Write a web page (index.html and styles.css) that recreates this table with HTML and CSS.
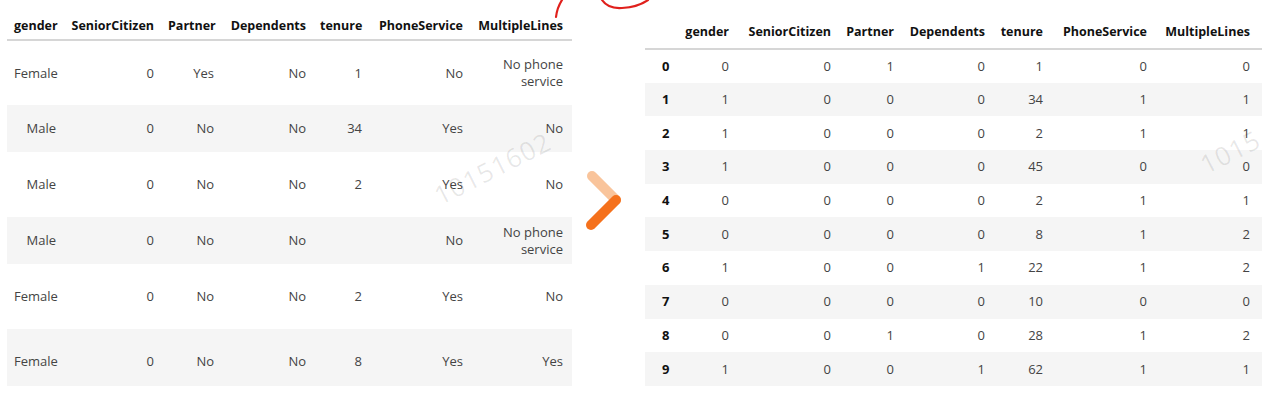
FILE: index.html
```html
<!DOCTYPE html>
<html>
<head>
<meta charset="utf-8">
<link rel="stylesheet" href="styles.css">
</head>
<body>
<div class="page">
  <table class="df left">
    <colgroup>
      <col class="c1"><col class="c2"><col class="c3"><col class="c4"><col class="c5"><col class="c6"><col class="c7">
    </colgroup>
    <thead>
      <tr><th>gender</th><th>SeniorCitizen</th><th>Partner</th><th>Dependents</th><th>tenure</th><th>PhoneService</th><th class="last">MultipleLines</th></tr>
    </thead>
    <tbody>
      <tr class="tall"><td>Female</td><td>0</td><td>Yes</td><td>No</td><td>1</td><td>No</td><td class="last">No phone<br>service</td></tr>
      <tr class="short odd"><td>Male</td><td>0</td><td>No</td><td>No</td><td>34</td><td>Yes</td><td class="last">No</td></tr>
      <tr class="tall"><td>Male</td><td>0</td><td>No</td><td>No</td><td>2</td><td>Yes</td><td class="last">No</td></tr>
      <tr class="short odd"><td>Male</td><td>0</td><td>No</td><td>No</td><td></td><td>No</td><td class="last">No phone<br>service</td></tr>
      <tr class="tall"><td>Female</td><td>0</td><td>No</td><td>No</td><td>2</td><td>Yes</td><td class="last">No</td></tr>
      <tr class="end odd"><td>Female</td><td>0</td><td>No</td><td>No</td><td>8</td><td>Yes</td><td class="last">Yes</td></tr>
    </tbody>
  </table>

  <div class="arrow">
    <svg width="73" height="70" viewBox="0 0 73 70">
      <line x1="20" y1="9" x2="44" y2="33" class="arrow-top"/>
      <line x1="44" y1="33" x2="19" y2="58" class="arrow-bottom"/>
    </svg>
  </div>

  <table class="df right">
    <colgroup>
      <col class="r0"><col class="r1"><col class="r2"><col class="r3"><col class="r4"><col class="r5"><col class="r6"><col class="r7">
    </colgroup>
    <thead>
      <tr><th class="idx"></th><th>gender</th><th>SeniorCitizen</th><th>Partner</th><th>Dependents</th><th>tenure</th><th>PhoneService</th><th class="last">MultipleLines</th></tr>
    </thead>
    <tbody>
      <tr><th class="idx">0</th><td>0</td><td>0</td><td>1</td><td>0</td><td>1</td><td>0</td><td class="last">0</td></tr>
      <tr class="odd"><th class="idx">1</th><td>1</td><td>0</td><td>0</td><td>0</td><td>34</td><td>1</td><td class="last">1</td></tr>
      <tr><th class="idx">2</th><td>1</td><td>0</td><td>0</td><td>0</td><td>2</td><td>1</td><td class="last">1</td></tr>
      <tr class="odd"><th class="idx">3</th><td>1</td><td>0</td><td>0</td><td>0</td><td>45</td><td>0</td><td class="last">0</td></tr>
      <tr><th class="idx">4</th><td>0</td><td>0</td><td>0</td><td>0</td><td>2</td><td>1</td><td class="last">1</td></tr>
      <tr class="odd"><th class="idx">5</th><td>0</td><td>0</td><td>0</td><td>0</td><td>8</td><td>1</td><td class="last">2</td></tr>
      <tr><th class="idx">6</th><td>1</td><td>0</td><td>0</td><td>1</td><td>22</td><td>1</td><td class="last">2</td></tr>
      <tr class="odd"><th class="idx">7</th><td>0</td><td>0</td><td>0</td><td>0</td><td>10</td><td>0</td><td class="last">0</td></tr>
      <tr><th class="idx">8</th><td>0</td><td>0</td><td>1</td><td>0</td><td>28</td><td>1</td><td class="last">2</td></tr>
      <tr class="odd"><th class="idx">9</th><td>1</td><td>0</td><td>0</td><td>1</td><td>62</td><td>1</td><td class="last">1</td></tr>
    </tbody>
  </table>

  <div class="wm wm-left">10151602</div>
  <div class="wm wm-right">1015</div>
  <svg class="scribble" width="120" height="24" viewBox="0 0 120 24">
    <path d="M10 0 Q5 8 4 17" />
    <path d="M50 0 Q56 9 70 8 Q86 7 96 0" />
  </svg>
</div>
</body>
</html>
```

FILE: styles.css
```css
html, body {
  margin: 0;
  padding: 0;
  background: #ffffff;
}

.page {
  position: relative;
  width: 1262px;
  height: 410px;
  overflow: hidden;
  display: flex;
  align-items: flex-start;
  font-family: "Open Sans", "Noto Sans", sans-serif;
  font-size: 13px;
  color: #444;
}

.df {
  border-collapse: collapse;
  border-spacing: 0;
  table-layout: fixed;
}

.df th, .df td {
  padding: 0 7px;
  text-align: right;
  white-space: nowrap;
  line-height: 17px;
}

.df thead th {
  color: #111;
  font-weight: 700;
  font-size: 12.5px;
  vertical-align: bottom;
  border-bottom: 2px solid #d6d6d6;
}

.df td {
  vertical-align: middle;
}

.df tr.odd td, .df tr.odd th {
  background: #f5f5f5;
}

/* left table */
.left {
  margin-left: 7px;
  width: 565px;
}
.left .c1 { width: 56px; }
.left .c2 { width: 98px; }
.left .c3 { width: 60px; }
.left .c4 { width: 92px; }
.left .c5 { width: 56px; }
.left .c6 { width: 101px; }
.left .c7 { width: 102px; }
.left .last { padding-right: 9px; }

.left thead th {
  height: 40px;
  padding-bottom: 5px;
  box-sizing: border-box;
}
.left tr.tall { height: 65px; }
.left tr.short { height: 47px; }
.left tr.end { height: 57px; }
.left tr.end td { padding-top: 7px; }

/* arrow */
.arrow {
  width: 73px;
  flex: none;
  padding-top: 167px;
}
.arrow svg { display: block; }
.arrow-top {
  stroke: #f9c49b;
  stroke-width: 10;
  stroke-linecap: round;
}
.arrow-bottom {
  stroke: #f5711c;
  stroke-width: 10;
  stroke-linecap: round;
}

/* right table */
.right {
  width: 617px;
}
.right .r0 { width: 31px; }
.right .r1 { width: 60px; }
.right .r2 { width: 102px; }
.right .r3 { width: 63px; }
.right .r4 { width: 91px; }
.right .r5 { width: 58px; }
.right .r6 { width: 104px; }
.right .r7 { width: 108px; }
.right .last { padding-right: 12px; }

.right thead th {
  height: 49px;
  padding-bottom: 8px;
  box-sizing: border-box;
}
.right tbody tr { height: 33.7px; }
.right th.idx {
  text-align: left;
  padding-left: 17px;
  font-weight: 700;
  color: #111;
}

/* overlays */
.wm {
  position: absolute;
  color: rgba(0, 0, 0, 0.09);
  font-size: 26px;
  letter-spacing: 1px;
  transform: rotate(-27deg);
  transform-origin: left bottom;
  pointer-events: none;
}
.wm-left {
  left: 444px;
  top: 177px;
}
.wm-right {
  left: 1210px;
  top: 146px;
}

.scribble {
  position: absolute;
  left: 552px;
  top: 0;
  fill: none;
  stroke: #e0201c;
  stroke-width: 2.2;
  stroke-linecap: round;
}
```
